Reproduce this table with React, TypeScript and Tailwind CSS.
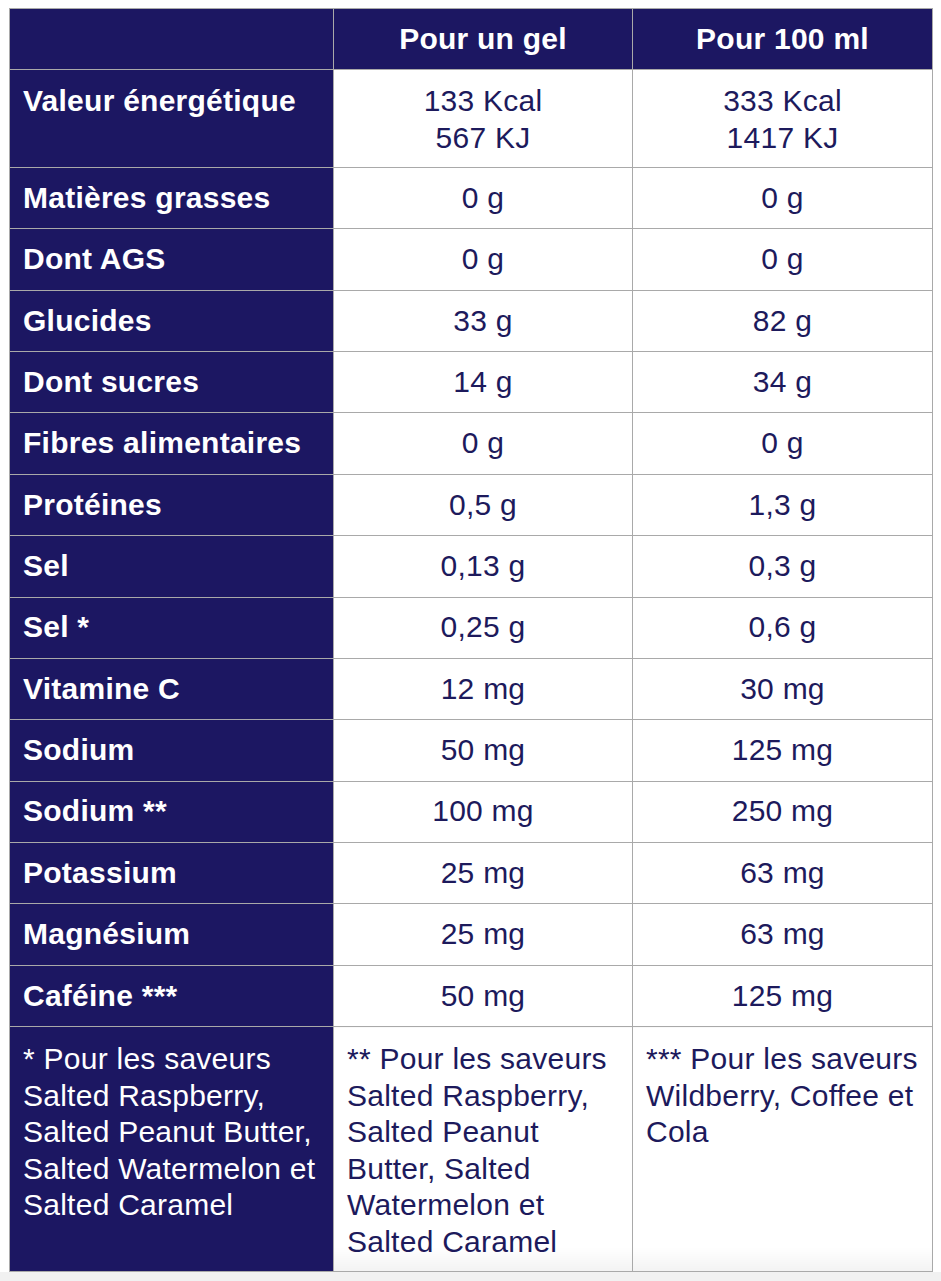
const rows: [string, string, string][] = [
  ['Matières grasses', '0 g', '0 g'],
  ['Dont AGS', '0 g', '0 g'],
  ['Glucides', '33 g', '82 g'],
  ['Dont sucres', '14 g', '34 g'],
  ['Fibres alimentaires', '0 g', '0 g'],
  ['Protéines', '0,5 g', '1,3 g'],
  ['Sel', '0,13 g', '0,3 g'],
  ['Sel *', '0,25 g', '0,6 g'],
  ['Vitamine C', '12 mg', '30 mg'],
  ['Sodium', '50 mg', '125 mg'],
  ['Sodium **', '100 mg', '250 mg'],
  ['Potassium', '25 mg', '63 mg'],
  ['Magnésium', '25 mg', '63 mg'],
  ['Caféine ***', '50 mg', '125 mg'],
];

const label = 'border border-[#a9a9a9] bg-[#1c1762] px-[13px] text-left font-bold text-white';
const cell = 'border border-[#a9a9a9] bg-white px-[13px] text-center text-[#1d1a5c]';

export default function App() {
  return (
    <div className="min-h-[1281px] bg-white pt-[8px] pl-[9px] font-['Liberation_Sans',Arial,sans-serif] text-[30px] leading-[36.6px] tracking-[0.25px]">
      <table className="w-[923px] table-fixed border-collapse">
        <colgroup>
          <col className="w-[324px]" />
          <col className="w-[299px]" />
          <col className="w-[300px]" />
        </colgroup>
        <thead>
          <tr className="h-[61px]">
            <th className="border border-[#a9a9a9] bg-[#1c1762]" />
            <th className="border border-[#a9a9a9] bg-[#1c1762] text-center font-bold text-white">Pour un gel</th>
            <th className="border border-[#a9a9a9] bg-[#1c1762] text-center font-bold text-white">Pour 100 ml</th>
          </tr>
        </thead>
        <tbody>
          <tr className="h-[98px]">
            <td className={`${label} align-top pt-[13px]`}>Valeur énergétique</td>
            <td className={`${cell} align-top pt-[13px]`}>
              133 Kcal
              <br />
              567 KJ
            </td>
            <td className={`${cell} align-top pt-[13px]`}>
              333 Kcal
              <br />
              1417 KJ
            </td>
          </tr>
          {rows.map(([name, gel, ml]) => (
            <tr key={name} className="h-[61.36px]">
              <td className={label}>{name}</td>
              <td className={cell}>{gel}</td>
              <td className={cell}>{ml}</td>
            </tr>
          ))}
          <tr className="h-[245px]">
            <td className="border border-[#a9a9a9] bg-[#1c1762] px-[13px] pt-[14px] pb-[8px] align-top text-white">
              * Pour les saveurs Salted Raspberry, Salted Peanut Butter, Salted Watermelon et Salted Caramel
            </td>
            <td className="border border-[#a9a9a9] bg-gradient-to-b from-white from-90% to-[#f3f3f3] px-[13px] pt-[14px] pb-[8px] align-top text-[#1d1a5c]">
              ** Pour les saveurs Salted Raspberry, Salted Peanut Butter, Salted Watermelon et Salted Caramel
            </td>
            <td className="border border-[#a9a9a9] bg-gradient-to-b from-white from-90% to-[#f3f3f3] px-[13px] pt-[14px] pb-[8px] align-top text-[#1d1a5c]">
              *** Pour les saveurs Wildberry, Coffee et Cola
            </td>
          </tr>
        </tbody>
      </table>
      <div className="-ml-[9px] h-[10px] bg-[#f1f1f1]" />
    </div>
  );
}
